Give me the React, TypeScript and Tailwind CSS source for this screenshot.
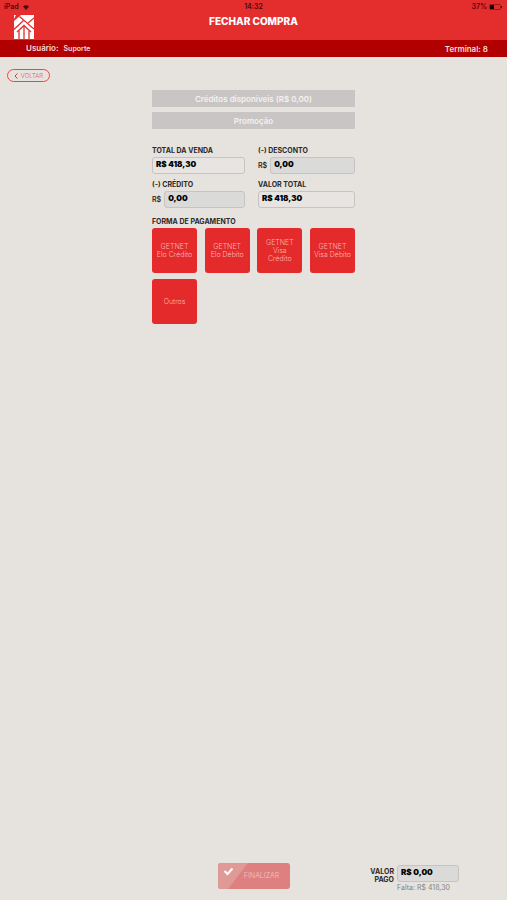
import { useState } from "react";

const payments = [
  ["GETNET", "Elo Crédito"],
  ["GETNET", "Elo Débito"],
  ["GETNET", "Visa", "Crédito"],
  ["GETNET", "Visa Débito"],
  ["Outros"],
];

function Logo() {
  return (
    <svg width="20" height="24" viewBox="0 0 20 24" aria-hidden="true">
      <rect width="20" height="24" fill="#fff" />
      <path d="M2 0 H7 L0 6 V4 Z" fill="#e42d2d" />
      <g fill="none" stroke="#e42d2d" strokeWidth="1.3">
        <path d="M5.5 1.5 L20 14" />
        <path d="M0 14.5 L9.5 5.5" />
        <path d="M14 8 L20 3" />
        <path d="M5 24 V16" />
        <path d="M3 17 L10 10.5 L17 17" />
        <path d="M10 11 V24" />
        <path d="M15 24 V16" />
      </g>
    </svg>
  );
}

function StatusBar() {
  return (
    <div className="grid grid-cols-3 items-center h-3 px-1 pt-0.5 text-[7px] leading-[8px] font-semibold text-[#4a0b0b]">
      <div className="flex items-center gap-1">
        <span>iPad</span>
        <svg width="6" height="5" viewBox="0 0 6 5" aria-hidden="true">
          <path d="M0 1.4 Q3 -1 6 1.4 L3 5 Z" fill="#4a0b0b" />
        </svg>
      </div>
      <span className="text-center">14:32</span>
      <div className="flex items-center justify-end gap-0.5">
        <span>37%</span>
        <svg width="14" height="6" viewBox="0 0 14 6" aria-hidden="true">
          <rect x="0.5" y="0.5" width="11" height="5" rx="1" fill="none" stroke="#7a1212" strokeWidth="0.7" />
          <rect x="1" y="1" width="4" height="4" fill="#1a0000" />
          <path d="M12.5 2 V4" stroke="#4a0b0b" />
        </svg>
      </div>
    </div>
  );
}

type FieldProps = {
  id: string;
  label: string;
  value: string;
  prefix?: boolean;
  onChange?: (value: string) => void;
};

function Field({ id, label, value, prefix, onChange }: FieldProps) {
  return (
    <div>
      <label htmlFor={id} className="block text-[7px] leading-[10px] font-bold">
        {label}
      </label>
      <div className="flex items-center mt-px gap-[3px]">
        {prefix && <span className="text-[7px] leading-[10px] font-semibold">R$</span>}
        <input
          id={id}
          type="text"
          value={value}
          readOnly={!onChange}
          onChange={(e) => onChange?.(e.target.value)}
          className={`flex-1 min-w-0 h-[17px] px-[3px] pb-[3px] rounded-[3px] border border-[#c6c4c2] text-[8px] font-black text-black ${
            prefix ? "bg-[#dadad9]" : "bg-[#e7e4e1]"
          }`}
        />
      </div>
    </div>
  );
}

export default function App() {
  const [discount, setDiscount] = useState("0,00");
  const [credit, setCredit] = useState("0,00");
  const [paid, setPaid] = useState("R$ 0,00");

  return (
    <div className="min-h-screen flex flex-col bg-[#e6e2de] text-[#2b2929] font-[Inter,sans-serif]">
      <header>
        <div className="h-10 bg-[#e42d2d]">
          <StatusBar />
          <div className="grid grid-cols-3 items-start px-3.5 pt-[3px]">
            <Logo />
            <h1 className="text-center text-[10px] leading-[12px] font-extrabold text-white whitespace-nowrap">
              FECHAR COMPRA
            </h1>
          </div>
        </div>
        <div className="flex items-center justify-between h-[17px] pl-[26px] pr-[19px] bg-[#b20000] text-[8px] leading-[12px] font-semibold text-[#f6dcdc]">
          <div className="flex items-baseline gap-[5px]">
            <span>Usuário:</span>
            <span className="text-[7px]">Suporte</span>
          </div>
          <span>Terminal: 8</span>
        </div>
      </header>

      <div className="flex px-[7px] pt-3">
        <button
          type="button"
          className="flex items-center justify-center gap-[3px] w-[43px] h-[13px] rounded-full border border-[#de4b4b] text-[6px] leading-[8px] font-light text-[#dc5c5c]"
        >
          <svg width="4" height="6" viewBox="0 0 4 6" aria-hidden="true">
            <path d="M3.4 0.5 L1 3 L3.4 5.5" fill="none" stroke="#d93636" />
          </svg>
          VOLTAR
        </button>
      </div>

      <main className="flex-1 w-[203px] mx-auto pt-2">
        <div className="flex flex-col gap-[5px]">
          <button type="button" className="h-[17px] bg-[#c8c5c4] text-[8px] leading-[10px] font-semibold text-[#f4f2f1]">
            Créditos disponíveis (R$ 0,00)
          </button>
          <button type="button" className="h-[17px] bg-[#c8c5c4] text-[8px] leading-[10px] font-semibold text-[#f4f2f1]">
            Promoção
          </button>
        </div>

        <div className="grid grid-cols-[93px_97px] justify-between gap-y-1.5 mt-[17px]">
          <Field id="total" label="TOTAL DA VENDA" value="R$ 418,30" />
          <Field id="desconto" label="(-) DESCONTO" value={discount} prefix onChange={setDiscount} />
          <Field id="credito" label="(-) CRÉDITO" value={credit} prefix onChange={setCredit} />
          <Field id="valor" label="VALOR TOTAL" value="R$ 418,30" />
        </div>

        <h2 className="mt-[9px] text-[7px] leading-[10px] font-bold">FORMA DE PAGAMENTO</h2>
        <div className="grid grid-cols-[repeat(4,45px)] justify-between gap-y-1.5 mt-px">
          {payments.map((lines) => (
            <button
              key={lines.join(" ")}
              type="button"
              className="h-[45px] rounded-[3px] bg-[#e42a2b] text-[7px] leading-[8px] font-light text-[#f8b9b3]"
            >
              {lines.map((line) => (
                <span key={line} className="block whitespace-nowrap">
                  {line}
                </span>
              ))}
            </button>
          ))}
        </div>
      </main>

      <footer className="grid grid-cols-[1fr_72px_1fr] items-start pb-[7px]">
        <button
          type="submit"
          className="relative col-start-2 h-[26px] pl-4 rounded-[3px] overflow-hidden bg-[#de8080] text-[7px] font-light text-[#f2c4c2]"
        >
          <svg className="absolute left-0 top-0" width="30" height="26" viewBox="0 0 30 26" aria-hidden="true">
            <path d="M0 0 H30 L10 26 H0 Z" fill="#df9996" />
            <path d="M6.5 8 L9.5 11 L14.5 5.5" fill="none" stroke="#fff" strokeWidth="2" />
          </svg>
          FINALIZAR
        </button>
        <div className="flex justify-end gap-[3px] pt-0.5 pr-12">
          <label htmlFor="pago" className="pt-[3px] text-right text-[7px] leading-[8px] font-bold">
            <span className="block">VALOR</span>
            <span className="block">PAGO</span>
          </label>
          <div>
            <input
              id="pago"
              type="text"
              value={paid}
              onChange={(e) => setPaid(e.target.value)}
              className="block w-[62px] h-[17px] px-[3px] pb-[3px] rounded-[3px] border border-[#c6c4c2] bg-[#dadad9] text-[8px] font-black text-black"
            />
            <p className="mt-px text-[7px] leading-[10px] text-[#858281] whitespace-nowrap">Falta: R$ 418,30</p>
          </div>
        </div>
      </footer>
    </div>
  );
}
